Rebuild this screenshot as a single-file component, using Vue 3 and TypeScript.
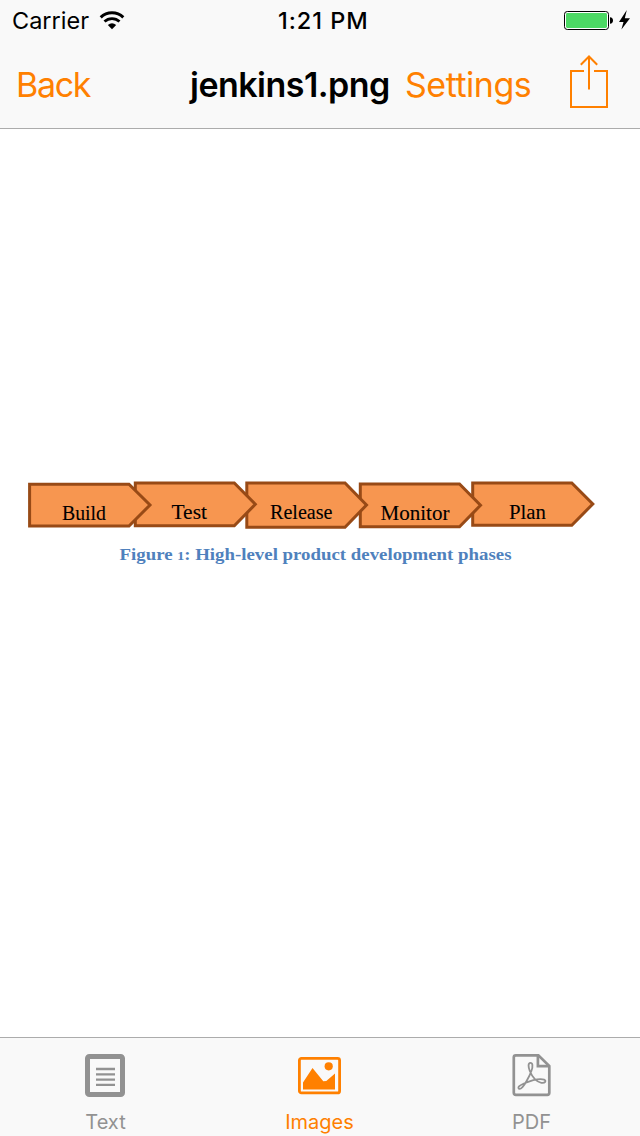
<script setup lang="ts">
interface Phase {
  label: string
  points: string
  x: number
  y: number
  width: number
}

// Later phases sit underneath the tip of the preceding one.
const phases: Phase[] = [
  { label: 'Plan', points: '472.7,482.9 571.8,482.9 592.8,504 571.8,525.2 472.7,525.2', x: 509, y: 518.5, width: 37 },
  { label: 'Monitor', points: '360.3,484 459.5,484 480.5,505.3 459.5,526.7 360.3,526.7', x: 380.5, y: 519.6, width: 69 },
  { label: 'Release', points: '246.8,483 345,483 366.5,505 345,527.3 246.8,527.3', x: 270, y: 518.6, width: 62.5 },
  { label: 'Test', points: '135.3,483 234.3,483 255.3,504.3 234.3,525.8 135.3,525.8', x: 171.5, y: 518.6, width: 35.5 },
  { label: 'Build', points: '29.6,484.2 129,484.2 150,505 129,526 29.6,526', x: 62, y: 519.6, width: 44 },
]
</script>

<template>
  <div class="screen">
    <header class="header">
      <div class="status">
        <div class="carrier">
          <span class="carrier-name">Carrier</span>
          <svg class="wifi" width="26" height="19" viewBox="0 0 26 19">
            <path d="M1.7 6.3A16.5 16.5 0 0 1 24.3 6.3" fill="none" stroke="#000" stroke-width="3" />
            <path d="M5.5 10.6A10.8 10.8 0 0 1 20.5 10.6" fill="none" stroke="#000" stroke-width="2.8" />
            <path d="M8.8 14Q13 10.6 17.2 14L13 18.3Z" fill="#000" />
          </svg>
        </div>
        <span class="time">1:21 PM</span>
        <svg class="battery" width="68" height="24" viewBox="0 0 68 24">
          <rect x="0.5" y="2.5" width="44" height="18" rx="2.8" fill="#fff" stroke="#000" />
          <rect x="2" y="4" width="41" height="15" rx="1.4" fill="#4cd964" />
          <path d="M46 8.2Q49 8.5 49 11.5T46 14.8Z" fill="#000" />
          <path d="M62.8 1L55 13H59.5L57.4 20.5L66 9.2H60.8Z" fill="#000" />
        </svg>
      </div>
      <nav class="nav">
        <a class="back">Back</a>
        <h1 class="title">jenkins1.png</h1>
        <a class="settings">Settings</a>
        <svg class="share" width="40" height="54" viewBox="0 0 40 54" fill="none" stroke="#ff8000" stroke-width="2">
          <path d="M15 16H2V52H38V16H25" />
          <path d="M20 34.5V2M11.8 9.7L20 1.5L28.2 9.7" />
        </svg>
      </nav>
    </header>

    <main class="viewer">
      <svg class="figure" width="640" height="110" viewBox="0 470 640 110">
        <g v-for="phase in phases" :key="phase.label">
          <polygon :points="phase.points" fill="#f79650" stroke="#984a16" stroke-width="3" />
          <text class="phase" :x="phase.x" :y="phase.y" :textLength="phase.width" lengthAdjust="spacingAndGlyphs">{{ phase.label }}</text>
        </g>
        <text class="caption" x="119.5" y="560.3" textLength="392" lengthAdjust="spacingAndGlyphs">Figure <tspan class="old-style">1</tspan>: High-level product development phases</text>
      </svg>
    </main>

    <footer class="tabs">
      <div class="tab">
        <svg width="44" height="44" viewBox="0 0 44 44">
          <rect x="3.5" y="3.5" width="35" height="38" rx="1.8" fill="none" stroke="#929292" stroke-width="5" />
          <path d="M12 16H31M12 21.3H31M12 26.6H31M12 31.9H31" stroke="#929292" stroke-width="2.3" />
        </svg>
        <span class="label">Text</span>
      </div>
      <div class="tab active">
        <svg width="44" height="44" viewBox="0 0 44 44">
          <rect x="1.4" y="5.4" width="40.2" height="34.5" rx="2" fill="none" stroke="#ff8000" stroke-width="2.8" />
          <circle cx="30.7" cy="13.3" r="4.1" fill="#ff8000" />
          <path d="M5 35V29.5L14.5 15L25.3 28.2L28.3 28L37 20.5V36.5H5Z" fill="#ff8000" />
        </svg>
        <span class="label">Images</span>
      </div>
      <div class="tab">
        <svg width="44" height="44" viewBox="-0.6 1 44 44" fill="none" stroke="#929292">
          <path d="M5.2 3.3H27.8L38.7 14V40.8Q38.7 42.8 36.7 42.8H5.2Q3.2 42.8 3.2 40.8V5.3Q3.2 3.3 5.2 3.3Z" stroke-width="2.7" />
          <path d="M27.3 4V14.2H38.5" stroke-width="2.7" />
          <path d="M19.8 10.8C17.2 10.8 17.7 15.2 19.2 19C21.6 24.8 25.7 29.8 30.8 30.8C34.5 31.4 36.2 28.7 33.5 27.6C28.7 26 19.5 28.9 13.3 31.5C9.3 33.2 6.8 35.3 8.2 36.6C10 38.2 13.5 33.6 16 29C19 23.7 22.4 16.5 21.8 12.8C21.6 11.4 20.9 10.8 19.8 10.8Z" stroke-width="1.8" />
        </svg>
        <span class="label">PDF</span>
      </div>
    </footer>
  </div>
</template>

<style>
body {
  margin: 0;
  background: #fff;
}
</style>

<style scoped>
.screen {
  width: 640px;
  height: 1136px;
  display: flex;
  flex-direction: column;
  overflow: hidden;
  background: #fff;
  font-family: Inter, "Liberation Sans", sans-serif;
}
.header {
  box-sizing: border-box;
  height: 129px;
  background: #f9f9f9;
  border-bottom: 1px solid #acacac;
}
.status {
  height: 41px;
  display: grid;
  grid-template-columns: 278px 1fr 68px;
  padding-right: 8px;
  align-items: center;
  font-size: 24px;
  line-height: 41px;
}
.carrier {
  display: flex;
  align-items: center;
  padding-left: 12px;
}
.carrier-name {
  width: 87px;
  font-size: 23.5px;
}
.time {
  font-weight: 500;
  font-size: 23.5px;
  letter-spacing: 0.95px;
}
.nav {
  height: 88px;
  display: grid;
  grid-template-columns: 174px 215px 164px 40px;
  padding-left: 16px;
  line-height: 88px;
  font-size: 34px;
  white-space: nowrap;
}
.back,
.settings {
  color: #ff8000;
}
.back {
  letter-spacing: -1.3px;
}
.settings {
  letter-spacing: -0.5px;
}
.title {
  margin: 0;
  font-size: 34px;
  font-weight: 600;
  letter-spacing: -0.52px;
}
.share {
  margin-top: 14px;
}
.viewer {
  flex: 1;
  display: flex;
  flex-direction: column;
  padding-top: 341px;
}
.figure {
  display: block;
}
.phase {
  font-family: "Liberation Serif", serif;
  font-size: 20.3px;
  fill: #000;
  stroke: #000;
  stroke-width: 0.1px;
}
.caption {
  font-family: "Liberation Serif", serif;
  font-size: 17.5px;
  font-weight: 700;
  fill: #4f81bd;
}
.old-style {
  font-size: 13px;
}
.tabs {
  box-sizing: border-box;
  height: 99px;
  display: grid;
  grid-template-columns: 211px 217px 207px;
  background: #f9f9f9;
  border-top: 1px solid #acacac;
}
.tab {
  display: flex;
  flex-direction: column;
  align-items: center;
  padding-top: 15px;
  color: #929292;
}
.tab.active {
  color: #ff8000;
}
.label {
  margin-top: 13px;
  font-size: 20px;
  line-height: 24px;
}
</style>
